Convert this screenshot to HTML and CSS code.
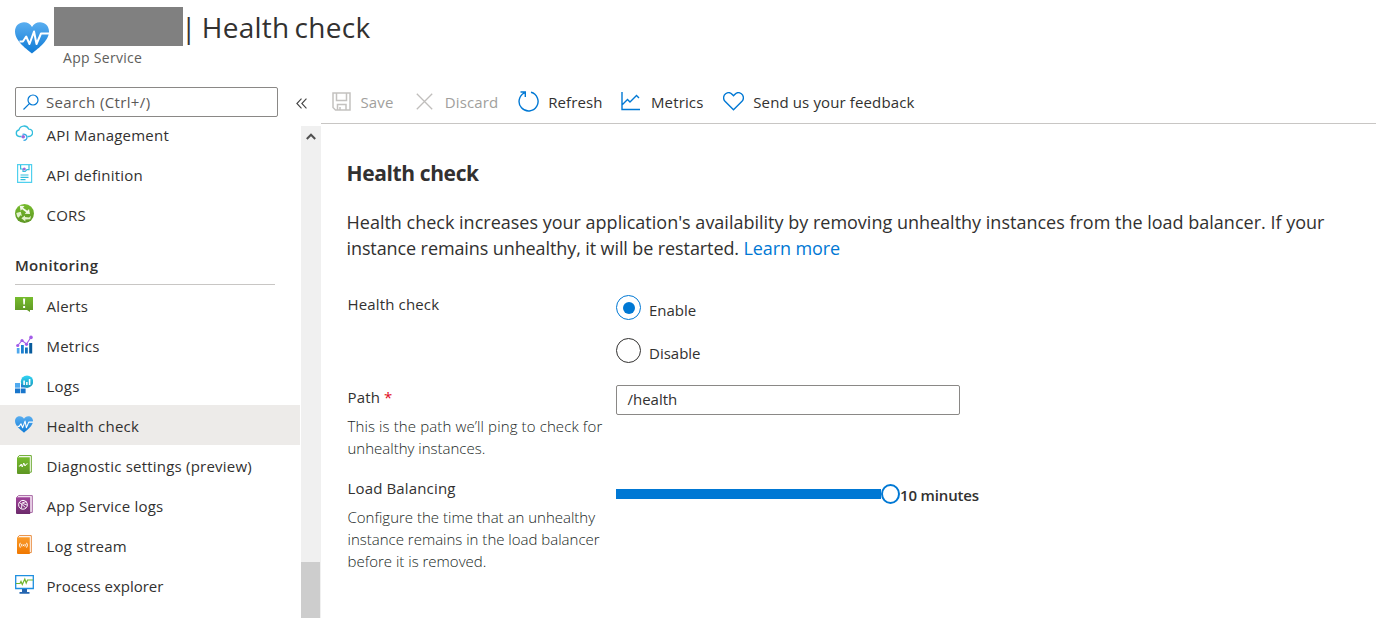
FILE: index.html
```html
<!DOCTYPE html>
<html lang="en">
<head>
<meta charset="utf-8">
<title>Health check</title>
<link rel="stylesheet" href="styles.css">
</head>
<body>
<svg class="defs" width="0" height="0" aria-hidden="true">
  <defs>
    <linearGradient id="blue" x1="0" y1="0" x2="0" y2="1"><stop offset="0" stop-color="#5aaef0"/><stop offset="1" stop-color="#0f7bd6"/></linearGradient>
    <linearGradient id="green" x1="0" y1="0" x2="0" y2="1"><stop offset="0" stop-color="#76bc2d"/><stop offset="1" stop-color="#5e9624"/></linearGradient>
    <linearGradient id="purple" x1="0" y1="0" x2="0" y2="1"><stop offset="0" stop-color="#a0439a"/><stop offset="1" stop-color="#6c2a6b"/></linearGradient>
    <linearGradient id="orange" x1="0" y1="0" x2="0" y2="1"><stop offset="0" stop-color="#fa9a2a"/><stop offset="1" stop-color="#f07800"/></linearGradient>
    <linearGradient id="cyan" x1="0" y1="0" x2="0" y2="1"><stop offset="0" stop-color="#32d4f5"/><stop offset="1" stop-color="#1795b8"/></linearGradient>
    <symbol id="heart" viewBox="0 0 34 32">
      <path fill="url(#blue)" d="M17 31.500C13 28 0 19.500 0 9.500C0 4 4 .3 9 .3c3.500 0 6.500 1.700 8 4.700C18.500 2 21.500.3 25 .3c5 0 9 3.700 9 9.200C34 19.500 21 28 17 31.500z"/>
      <path fill="none" stroke="#fff" stroke-width="2" stroke-linejoin="round" d="M4.500 19.500h3.400l3.300-5 3.300 7.500 4.500-12.500 2.500 12.500 4.500-10.500H34"/>
    </symbol>
  </defs>
</svg>

<header class="header">
  <svg class="header-icon" viewBox="0 0 34 32"><use href="#heart"/></svg>
  <div>
    <div class="title-row"><span class="redacted"></span><h1 class="title">| Health check</h1></div>
    <div class="subtitle">App Service</div>
  </div>
</header>

<div class="layout">
  <aside class="sidebar">
    <div class="search-row">
      <label class="search">
        <svg class="search-icon" viewBox="0 0 16 16" fill="none" stroke="#0078d4" stroke-width="1.200"><circle cx="10" cy="6" r="5"/><path d="M6.400 9.600L.5 15.500"/></svg>
        <span>Search (Ctrl+/)</span>
      </label>
      <svg class="collapse" viewBox="0 0 10 10" fill="none" stroke="#444" stroke-width="1"><path d="M5 .5L.8 5 5 9.500M9.500.5L5.300 5l4.200 4.500"/></svg>
    </div>
    <div class="nav-wrap">
      <nav class="nav">
        <a class="item"><svg class="icon" viewBox="0 0 18 18" fill="none"><path stroke="#32bedd" stroke-width="1.300" d="M6.500 12H4.200a3.300 3.300 0 0 1-.3-6.500A5.200 5.200 0 0 1 13.700 4.600a3.700 3.700 0 0 1 .3 7.400h-1.500"/><path stroke="#38a9e6" stroke-width="1.300" d="M8.500 15.800c3 0 3.800-2 3.300-3.800-.5-1.700-2-2.600-4.300-2.200"/><circle cx="8.200" cy="12.200" r="1.800" fill="#a067da"/></svg><span>API Management</span></a>
        <a class="item"><svg class="icon" viewBox="0 0 18 19" fill="none"><path stroke="#50d0ee" stroke-width="1.200" d="M2.600.6h14v17.800h-14z"/><path stroke="#32bedd" stroke-width="1.200" d="M5.600 1v4H8v2.500h2.200L12 5.600h2V1"/><circle cx="9.300" cy="5" r="1.500" fill="#a067da"/><path stroke="#32bedd" stroke-width="1.200" d="M5.500 11h8M5.500 13.300h8M5.500 15.600h5"/></svg><span>API definition</span></a>
        <a class="item"><svg class="icon wide" viewBox="0 0 18 18"><circle cx="9" cy="9" r="9" fill="url(#green)"/><path fill="#f2f9e9" d="M4.500 1.600l4.500.2L7.600 3.600l4 2.800 1.700-1.600.9 4.700-5-.2 1.400-1.600L6.700 5 5.300 6.300z"/><path fill="#e2f2cc" d="M1.200 8.500l4.300-1.200 1 4-1.500-.6L3.500 13l-1.300-1zM6 13.500l3.500-2.700v1.600l3.800.3 1.800-1.500-.6 3.300-4.800.3.200 1.700z"/></svg><span>CORS</span></a>
        <div class="section">Monitoring</div>
        <a class="item"><svg class="icon" viewBox="0 0 18 18"><path fill="url(#green)" d="M0 1.500h18v13h-3v2L12 14.500H0z"/><path fill="#fff" d="M8 3h2.200l-.4 6H8.400zM8.100 10.500h2v2h-2z"/></svg><span>Alerts</span></a>
        <a class="item"><svg class="icon" viewBox="0 0 18 18"><path fill="#4fa8ed" d="M1.800 12.500h2.700V18H1.800z"/><path fill="#1a7fd0" d="M6 9.500h2.800V18H6z"/><path fill="#1272bd" d="M10 12h2.800V18H10z"/><path fill="#075b9c" d="M14.200 7.500H17.200V18h-3z"/><path fill="none" stroke="#a45de8" stroke-width="1.100" d="M2.700 10L7 5l4.500 3.500L16 1.800"/><g fill="#a45de8"><circle cx="2.700" cy="10" r="1.600"/><circle cx="7" cy="5" r="1.600"/><circle cx="11.500" cy="8.800" r="1.600"/><circle cx="16" cy="1.900" r="1.800"/></g></svg><span>Metrics</span></a>
        <a class="item"><svg class="icon" viewBox="0 0 18 18"><path fill="#4faaf0" d="M0 7.500h5v4.700H0z"/><path fill="#1976cc" d="M0 13h5v4.700H0zM5.700 13h4.900v4.700H5.700z"/><circle cx="12" cy="6.200" r="6.200" fill="url(#cyan)"/><path fill="#2384d4" d="M6 12h5l-5-4z"/><path fill="#fff" d="M8.300 5h1.600v4.500H8.300zM11.100 6.500h1.500v3h-1.500zM13.800 3.500h1.600v6h-1.600z"/></svg><span>Logs</span></a>
        <a class="item selected"><svg class="icon" viewBox="0 0 34 32"><use href="#heart"/></svg><span>Health check</span></a>
        <a class="item"><svg class="icon" viewBox="0 0 18 19"><path fill="#fff" stroke="#68a82c" d="M3 2L4.200.600H16.300v16.600H14"/><path fill="url(#green)" d="M2 2.200h12.800V19H3a1 1 0 0 1-1-1z"/><path fill="none" stroke="#fff" d="M3.800 11h1.400l1-2 1 3 1.600-4 1.200 3 .8-1.500 1.800-.8"/></svg><span>Diagnostic settings (preview)</span></a>
        <a class="item"><svg class="icon" viewBox="0 0 18 19"><path fill="#f7e9f6" stroke="#a566a2" d="M2 2L3.500.600h13.800v16.800H15"/><path fill="url(#purple)" d="M1 2.200h14.200V19H2a1 1 0 0 1-1-1z"/><g fill="none" stroke="#fff"><circle cx="8" cy="9.800" r="4.400"/><path d="M4.500 7.500l6 5M6.500 13.500L7 8l4.500-1.500M8 8.500l4 1.500" stroke-width=".9"/></g></svg><span>App Service logs</span></a>
        <a class="item"><svg class="icon" viewBox="0 0 18 19"><path fill="#fff" stroke="#e88a3c" d="M3 2L4.200.600H16.300v17H14"/><path fill="url(#orange)" d="M2 2.200h12.800V19H3a1 1 0 0 1-1-1z"/><g fill="none" stroke="#fff"><path d="M5.300 7.800q-1.600 2.400 0 4.800M11.600 7.800q1.600 2.400 0 4.800M7 8.900q-.8 1.300 0 2.600M9.900 8.900q.8 1.300 0 2.600"/></g><circle cx="8.450" cy="10.200" r=".7" fill="#fff"/></svg><span>Log stream</span></a>
        <a class="item snug"><svg class="icon wide" viewBox="0 0 19 19"><path fill="#fff" stroke="#1e8fe0" stroke-width="1.300" d="M.7.7h17.600v12.800H.7z"/><path fill="#2465b0" d="M7 14h5v3h2.500v1.800h-10V17H7z"/><path fill="none" stroke="#6fb52c" stroke-width="1.200" d="M1 8.500h4l1-2 1.300 3 2.500-5.500 1.400 4L12.500 5H18"/></svg><span>Process explorer</span></a>
      </nav>
      <div class="scrollbar">
        <svg class="scroll-up" viewBox="0 0 10 7" fill="none" stroke="#505050" stroke-width="2"><path d="M.8 6L5 1.700 9.200 6"/></svg>
        <div class="thumb"></div>
      </div>
    </div>
  </aside>

  <main class="main">
    <div class="toolbar">
      <a class="cmd disabled save"><svg width="19" height="19" viewBox="0 0 19 19" fill="none" stroke="#c4c2c0" stroke-width="1.500"><path d="M1 1h17v17H3.500L1 15.500zM4.500 1v7.500h10V1M5.500 18v-5.500h8.500V18M8 15v3"/></svg><span>Save</span></a>
      <a class="cmd disabled discard"><svg width="17" height="17" viewBox="0 0 17 17" fill="none" stroke="#c0bebc" stroke-width="1.300"><path d="M.8.800l15.400 15.400M16.200.8L.8 16.200"/></svg><span>Discard</span></a>
      <a class="cmd"><svg width="21" height="21" viewBox="0 0 21 21" fill="none" stroke="#0078d4" stroke-width="1.400"><path d="M13 1.300a9.500 9.500 0 1 1-6.500.6M2.500 1h4.800v5"/></svg><span>Refresh</span></a>
      <a class="cmd chart"><svg width="19" height="19" viewBox="0 0 19 19" fill="none" stroke="#0078d4" stroke-width="1.400"><path d="M1 0v17.500h18M1 13l5.500-5.500L9 10l6.500-6.500L18 6"/></svg><span>Metrics</span></a>
      <a class="cmd"><svg width="21" height="19" viewBox="0 0 21 19" fill="none" stroke="#0078d4" stroke-width="1.400"><path d="M10.500 17.700L2 9.300C-.2 7 .4 3.400 2.600 1.800 5 .1 7.700.7 9.300 2.500l1.200 1.300 1.200-1.300C13.300.7 16 .1 18.400 1.800c2.200 1.600 2.800 5.200.6 7.500z"/></svg><span>Send us your feedback</span></a>
    </div>
    <div class="content">
      <h2 class="heading">Health check</h2>
      <p class="intro">Health check increases your application's availability by removing unhealthy instances from the load balancer. If your<br><span class="tight">instance remains unhealthy, it will be restarted. <a class="link">Learn more</a></span></p>
      <div class="form">
        <div class="label">Health check</div>
        <div class="radios">
          <label class="radio"><span class="dot on"></span><span class="radio-text">Enable</span></label>
          <label class="radio"><span class="dot"></span><span class="radio-text">Disable</span></label>
        </div>
        <div class="label">Path <span class="req">*</span>
          <p class="hint"><span class="loose">This is the path we’ll ping to check for</span><br>unhealthy instances.</p></div>
        <div class="input">/health</div>
        <div class="label">Load Balancing
          <p class="hint">Configure the time that an unhealthy<br>instance remains in the load balancer<br>before it is removed.</p></div>
        <div class="slider"><span class="track"></span><span class="knob"></span><span class="value">10 minutes</span></div>
      </div>
    </div>
  </main>
</div>
</body>
</html>
```

FILE: styles.css
```css
* { box-sizing: border-box; }
body {
  margin: 0;
  height: 618px;
  overflow: hidden;
  background: #fff;
  color: #323130;
  font-family: "Open Sans", "Noto Sans", sans-serif;
  font-size: 15px;
  line-height: 20px;
  white-space: nowrap;
}
.defs { position: absolute; }
h1, h2, p { margin: 0; font-weight: 400; }

.header { display: flex; height: 87px; padding-left: 15px; }
.header-icon { width: 34px; height: 32px; margin: 22px 5px 0 0; }
.title-row { display: flex; padding-top: 7px; }
.redacted { width: 129px; height: 39px; background: #808080; }
.title { height: 39px; margin-left: -2px; font-size: 28px; line-height: 41px; letter-spacing: 0.28px; word-spacing: -2.5px; }
.subtitle { margin: 2px 0 0 9px; font-size: 14px; letter-spacing: 0.3px; color: #605e5c; }

.layout { display: flex; height: 531px; }
.sidebar { width: 321px; display: flex; flex-direction: column; }
.search-row { display: flex; align-items: center; height: 30px; padding-left: 15px; }
.search {
  display: flex; align-items: center; gap: 7px;
  width: 263px; height: 30px; padding-left: 7px;
  border: 1px solid #8a8886; border-radius: 2px;
  color: #5b5957; letter-spacing: 0.36px;
}
.search-icon { width: 16px; height: 16px; }
.collapse { width: 11px; height: 11px; margin: 2px 0 0 18px; }
.nav-wrap { display: flex; flex: 1; min-height: 0; }
.nav { width: 300px; margin: -3px 1px 0 0; letter-spacing: 0.22px; }
.item { display: flex; align-items: center; height: 40px; padding: 2px 0 0 15px; }
.icon { width: 18px; height: 19px; margin: -4px 13.5px 0 0; flex: none; }
.icon.wide { width: 19px; margin-right: 12.5px; }
.snug { letter-spacing: 0; }
.selected { background: #edebe9; }
.section { width: 260px; height: 51px; margin-left: 15px; padding-top: 21px; border-bottom: 1px solid #c8c6c4; font-weight: 600; letter-spacing: 0.3px; }
.scrollbar { display: flex; flex-direction: column; justify-content: space-between; align-items: center; width: 20px; margin-top: 9px; background: #f0f0f0; }
.scroll-up { width: 10px; height: 7px; margin-top: 7px; }
.thumb { width: 19px; height: 56px; margin-right: 1px; background: #cdcdcd; }

.main { flex: 1; }
.toolbar { display: flex; gap: 19.3px; height: 37px; border-bottom: 1px solid #c8c6c4; padding-left: 11px; letter-spacing: 0.13px; }
.cmd { display: flex; align-items: center; height: 30px; }
.cmd svg { margin-right: 9.5px; margin-top: -2px; }
.disabled { color: #a19f9d; }
.discard { margin-left: 3px; }
.discard svg { margin-right: 12px; }
.chart { margin-left: -1px; }
.chart svg { margin-right: 11px; }
.content { padding: 35px 0 0 25.5px; }
.heading { font-size: 21px; line-height: 28px; font-weight: 700; letter-spacing: -0.38px; }
.intro { margin-top: 22px; font-size: 18px; line-height: 26px; }
.tight { letter-spacing: -0.1px; }
.link { color: #0078d4; }
.form { display: grid; grid-template-columns: 269.5px 1fr; grid-template-rows: 93px 91px auto; margin-top: 33px; }
.label { padding-left: 1px; letter-spacing: 0.15px; }
.req { color: #e00b1c; }
.hint { margin-top: 8px; line-height: 22px; font-weight: 300; letter-spacing: 0; color: #201f1e; }
.loose { letter-spacing: 0.12px; }
.radios { padding-top: 1px; }
.radio { display: flex; height: 43px; gap: 8px; }
.radio-text { margin-top: 5px; }
.dot { display: flex; width: 25px; height: 25px; border: 1px solid #323130; border-radius: 50%; }
.dot.on { border-color: #0078d4; }
.dot.on::after { content: ""; width: 12px; height: 12px; margin: auto; border-radius: 50%; background: #0078d4; }
.input { display: flex; align-items: center; width: 344px; height: 30px; margin-top: -2px; padding: 0 0 2px 10.5px; border: 1px solid #8a8886; border-radius: 2px; }
.slider { display: flex; align-items: center; height: 20px; margin-top: 6px; }
.track { width: 265px; height: 10px; background: #0078d4; }
.knob { width: 19px; height: 20px; border: 2px solid #0078d4; border-radius: 50%; background: #fff; }
.value { margin-top: 2px; font-weight: 600; letter-spacing: -0.15px; }
```
